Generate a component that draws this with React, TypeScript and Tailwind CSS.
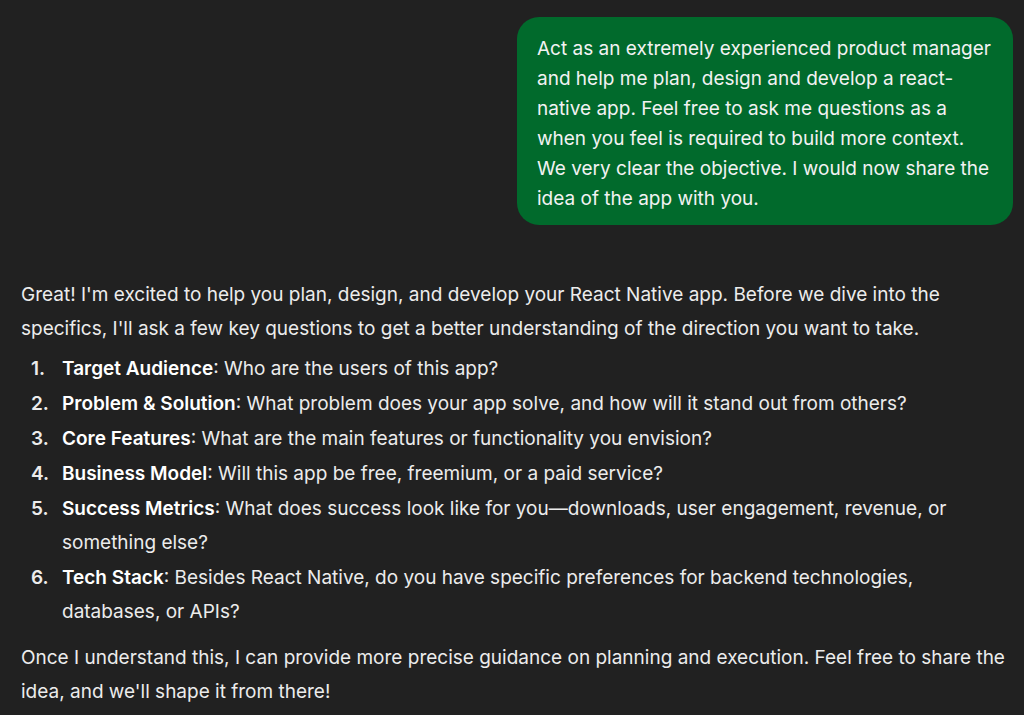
const items = [
  { title: 'Target Audience', text: 'Who are the users of this app?' },
  { title: 'Problem & Solution', text: 'What problem does your app solve, and how will it stand out from others?' },
  { title: 'Core Features', text: 'What are the main features or functionality you envision?' },
  { title: 'Business Model', text: 'Will this app be free, freemium, or a paid service?' },
  { title: 'Success Metrics', text: 'What does success look like for you\u2014downloads, user engagement, revenue, or something else?' },
  { title: 'Tech Stack', text: 'Besides React Native, do you have specific preferences for backend technologies, databases, or APIs?' },
];

export default function App() {
  return (
    <div className="min-h-screen bg-[#212121] text-[#ececec] pl-[21px] pr-[11px] pt-[17px] font-['Inter',sans-serif]">
      {/* User message */}
      <div className="flex justify-end">
        <div className="w-[496px] rounded-[22px] bg-[#016a2c] pl-5 pr-4 pt-[17px] pb-[11px] text-[19px] leading-[30px] text-[#f2f2f2]">
          Act as an extremely experienced product manager and help me plan, design and develop a react-native app. Feel free to ask me questions as a when you feel is required to build more context. We very clear the objective. I would now share the idea of the app with you.
        </div>
      </div>

      {/* Assistant reply */}
      <div className="mt-[53px] text-[19px] leading-[34px]">
        <p>
          Great! I'm excited to help you plan, design, and develop your React Native app. Before we dive into the specifics, I'll ask a few key questions to get a better understanding of the direction you want to take.
        </p>
        <ol className="mt-[6px] flex flex-col gap-px">
          {items.map((item, i) => (
            <li key={item.title} className="flex">
              <span className="w-[41px] flex-shrink-0 pl-[10px] font-semibold">{i + 1}.</span>
              <span>
                <strong className="font-semibold text-white">{item.title}</strong>: {item.text}
              </span>
            </li>
          ))}
        </ol>
        <p className="mt-[12px]">
          Once I understand this, I can provide more precise guidance on planning and execution. Feel free to share the idea, and we'll shape it from there!
        </p>
      </div>
    </div>
  );
}
